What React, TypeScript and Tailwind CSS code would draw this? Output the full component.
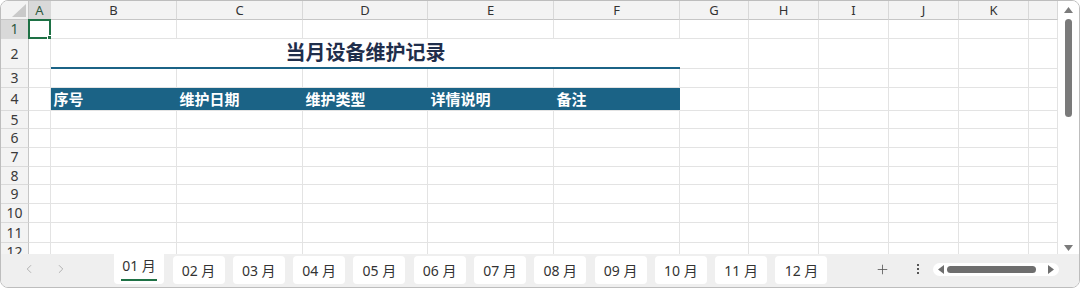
import { ChevronLeft, ChevronRight, Plus } from 'lucide-react';

const COLS = [
  { key: 'A', w: 'w-[22px]' },
  { key: 'B', w: 'w-[126px]' },
  { key: 'C', w: 'w-[126px]' },
  { key: 'D', w: 'w-[125px]' },
  { key: 'E', w: 'w-[126px]' },
  { key: 'F', w: 'w-[126px]' },
  { key: 'G', w: 'w-[69px]' },
  { key: 'H', w: 'w-[70px]' },
  { key: 'I', w: 'w-[70px]' },
  { key: 'J', w: 'w-[70px]' },
  { key: 'K', w: 'w-[70px]' },
  { key: '', w: 'w-[29px]' },
];

const ROW_H: Record<number, string> = {
  1: 'h-[19px]',
  2: 'h-[30px]',
  3: 'h-[19px]',
  4: 'h-[23px]',
  5: 'h-[18px]',
  6: 'h-[19px]',
  7: 'h-[19px]',
  8: 'h-[18px]',
  9: 'h-[19px]',
  10: 'h-[19px]',
  11: 'h-[20px]',
  12: 'h-[19px]',
};

const HEADERS = ['序号', '维护日期', '维护类型', '详情说明', '备注'];
const MONTHS = ['02', '03', '04', '05', '06', '07', '08', '09', '10', '11', '12'];

const cjk = "font-['Noto_Sans','Noto_Sans_CJK_SC',sans-serif]";

function RowHead({ n, h }: { n: number; h: string }) {
  const sel = n === 1;
  return (
    <div
      className={`${h} w-[28px] shrink-0 flex items-center justify-center border-r border-b border-r-[#c6c6c6] border-b-[#dadada] text-[14px] leading-none ${
        sel ? 'bg-[#d9d9d9] text-[#2f5a40]' : 'bg-[#f3f3f3] text-[#3a3a3a]'
      }`}
    >
      {n}
    </div>
  );
}

function Cell({ w, h, children }: { w: string; h: string; children?: React.ReactNode }) {
  return <div className={`${w} ${h} shrink-0 border-r border-b border-[#e3e3e3] relative`}>{children}</div>;
}

function GridRow({ n }: { n: number }) {
  const h = ROW_H[n];
  if (n === 2) {
    return (
      <div className="flex">
        <RowHead n={n} h={h} />
        <Cell w={COLS[0].w} h={h} />
        <div
          className={`w-[629px] ${h} shrink-0 border-b-2 border-[#1b6386] flex items-center justify-center text-[20px] font-bold text-[#1f2e4b] ${cjk}`}
        >
          当月设备维护记录
        </div>
        {COLS.slice(6).map((c, i) => (
          <Cell key={i} w={c.w} h={h} />
        ))}
      </div>
    );
  }
  if (n === 4) {
    return (
      <div className="flex">
        <RowHead n={n} h={h} />
        <Cell w={COLS[0].w} h={h} />
        {HEADERS.map((t, i) => (
          <div
            key={t}
            className={`${COLS[i + 1].w} ${h} shrink-0 bg-[#1b6386] border-b border-b-[#e3e3e3] flex items-center pl-[2.5px] text-[15px] font-bold text-white ${cjk}`}
          >
            {t}
          </div>
        ))}
        {COLS.slice(6).map((c, i) => (
          <Cell key={i} w={c.w} h={h} />
        ))}
      </div>
    );
  }
  return (
    <div className="flex">
      <RowHead n={n} h={h} />
      {COLS.map((c, i) => (
        <Cell key={i} w={c.w} h={h}>
          {n === 1 && i === 0 && (
            <div className="absolute -left-px -top-px w-[23px] h-[20px] border-2 border-[#1e7145]">
              <div className="absolute -right-[3px] -bottom-[3px] w-[5px] h-[5px] bg-[#1e7145] border border-white" />
            </div>
          )}
        </Cell>
      ))}
    </div>
  );
}

export default function App() {
  return (
    <div
      className={`w-[1080px] h-[288px] bg-white border border-[#bdbdbd] rounded-[8px] overflow-hidden flex flex-col ${cjk}`}
    >
      <div className="flex h-[253px] shrink-0">
        {/* sheet */}
        <div className="w-[1057px] shrink-0 overflow-hidden">
          <div className="flex h-[19px]">
            <div className="w-[28px] shrink-0 bg-[#f3f3f3] border-r border-b border-[#c6c6c6] flex items-end justify-end pr-[2px] pb-[2px]">
              <svg width="14" height="13" viewBox="0 0 14 13">
                <polygon points="14,0 14,13 0,13" fill="#c9c9c9" />
              </svg>
            </div>
            {COLS.map((c, i) => (
              <div
                key={i}
                className={`${c.w} shrink-0 border-r border-b border-r-[#d8d8d8] border-b-[#c6c6c6] flex items-center justify-center text-[13px] leading-none ${
                  c.key === 'A' ? 'bg-[#d9d9d9] text-[#2f5a40]' : 'bg-[#f3f3f3] text-[#333]'
                }`}
              >
                {c.key}
              </div>
            ))}
          </div>
          {[1, 2, 3, 4, 5, 6, 7, 8, 9, 10, 11, 12].map((n) => (
            <GridRow key={n} n={n} />
          ))}
        </div>
        {/* vertical scrollbar */}
        <div className="flex-1 bg-white flex flex-col items-center pt-[6px] pb-[3px]">
          <svg width="9" height="6" viewBox="0 0 9 6">
            <polygon points="4.5,0 9,6 0,6" fill="#7b7b7b" />
          </svg>
          <div className="mt-[6px] w-[7px] h-[98px] rounded-full bg-[#7a7a7a]" />
          <div className="flex-1" />
          <svg width="9" height="6" viewBox="0 0 9 6">
            <polygon points="0,0 9,0 4.5,6" fill="#7b7b7b" />
          </svg>
        </div>
      </div>

      {/* sheet tabs */}
      <div className="h-[33px] shrink-0 bg-[#efefef] flex text-[14px] text-[#333]">
        <div className="w-[113px] shrink-0 flex items-center pl-[21px] gap-[18px] pb-[3px]">
          <ChevronLeft size={14} strokeWidth={1.5} color="#a8a8a8" />
          <ChevronRight size={14} strokeWidth={1.5} color="#a8a8a8" />
        </div>
        <div className="w-[50px] h-[30px] shrink-0 bg-white rounded-b-[4px] flex flex-col items-center justify-center">
          <span className="leading-none mt-[1px]">01 月</span>
          <div className="mt-[6px] w-[36px] h-[2px] bg-[#1e7145]" />
        </div>
        <div className="flex gap-[8.3px] ml-[8.5px]">
          {MONTHS.map((m) => (
            <div
              key={m}
              className="w-[52px] h-[28px] mt-[2px] shrink-0 bg-white rounded-[4px] flex items-center justify-center leading-none pt-[1px]"
            >
              {m} 月
            </div>
          ))}
        </div>
        <div className="flex-1" />
        <div className="flex items-center pb-[3px]">
          <Plus size={15} strokeWidth={1.3} color="#555" />
          <div className="ml-[27px] flex flex-col gap-[2px]">
            <div className="w-[2px] h-[2px] bg-[#555]" />
            <div className="w-[2px] h-[2px] bg-[#555]" />
            <div className="w-[2px] h-[2px] bg-[#555]" />
          </div>
          <div className="ml-[14px] mr-[20px] w-[126px] h-[13px] rounded-full bg-white flex items-center px-[5px] gap-[3px]">
            <svg width="6" height="9" viewBox="0 0 6 9">
              <polygon points="6,0 6,9 0,4.5" fill="#6e6e6e" />
            </svg>
            <div className="w-[89px] h-[7px] rounded-full bg-[#6e6e6e]" />
            <div className="flex-1" />
            <svg width="6" height="9" viewBox="0 0 6 9">
              <polygon points="0,0 6,4.5 0,9" fill="#6e6e6e" />
            </svg>
          </div>
        </div>
      </div>
    </div>
  );
}
